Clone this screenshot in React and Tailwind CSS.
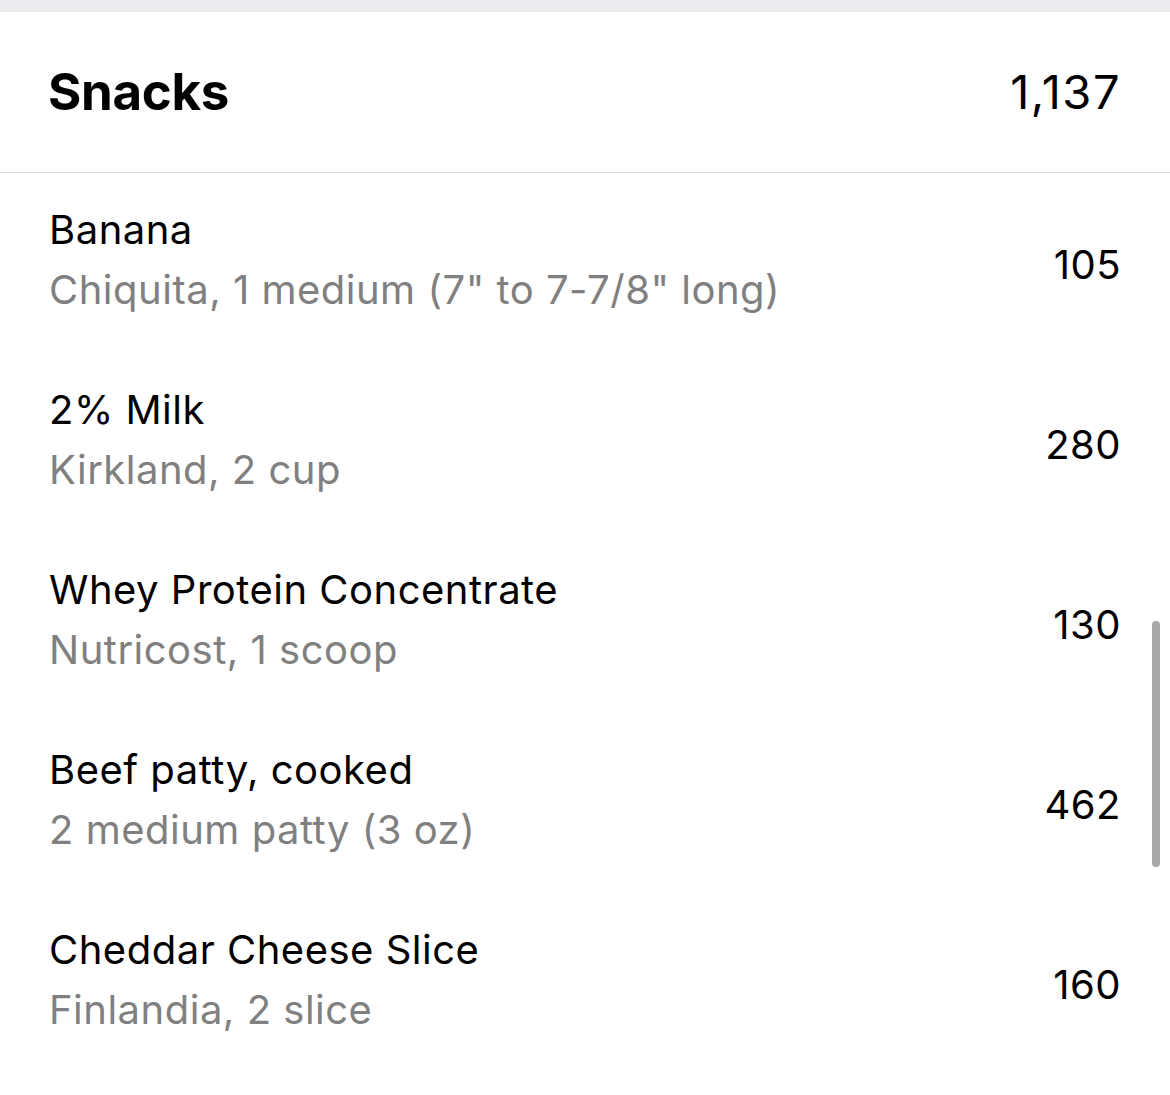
const items = [
  { name: 'Banana', detail: 'Chiquita, 1 medium (7" to 7-7/8" long)', kcal: 105 },
  { name: '2% Milk', detail: 'Kirkland, 2 cup', kcal: 280 },
  { name: 'Whey Protein Concentrate', detail: 'Nutricost, 1 scoop', kcal: 130 },
  { name: 'Beef patty, cooked', detail: '2 medium patty (3 oz)', kcal: 462 },
  { name: 'Cheddar Cheese Slice', detail: 'Finlandia, 2 slice', kcal: 160 },
]

export default function App() {
  return (
    <div className="relative w-[1170px] h-[1095px] overflow-hidden bg-white text-black font-['Inter','Liberation_Sans',sans-serif]">
      <div className="h-[12px] bg-[#ebebf0]" />

      {/* Header */}
      <div className="flex items-center justify-between h-[161px] pl-[48px] pr-[49px] border-b border-[#d9d9d9]">
        <h1 className="text-[51px] font-bold tracking-[-0.3px]">Snacks</h1>
        <span className="text-[47px] tracking-[1.5px]">1,137</span>
      </div>

      {/* Entries */}
      <div className="flex flex-col">
        {items.map(item => (
          <div key={item.name} className="flex items-center justify-between h-[180px] pl-[49px] pr-[49px]">
            <div className="flex flex-col gap-[14px] mb-[6px]">
              <span className="text-[40px] leading-[46px] tracking-[0.5px]">{item.name}</span>
              <span className="text-[40px] leading-[46px] tracking-[0.5px] text-[#808080]">{item.detail}</span>
            </div>
            <span className="text-[40px] tracking-[0.5px] pt-[4px]">{item.kcal}</span>
          </div>
        ))}
      </div>

      {/* scroll indicator */}
      <div className="absolute left-[1152px] top-[621px] w-[8px] h-[246px] rounded-full bg-[#a8a8a8]" />
    </div>
  )
}
